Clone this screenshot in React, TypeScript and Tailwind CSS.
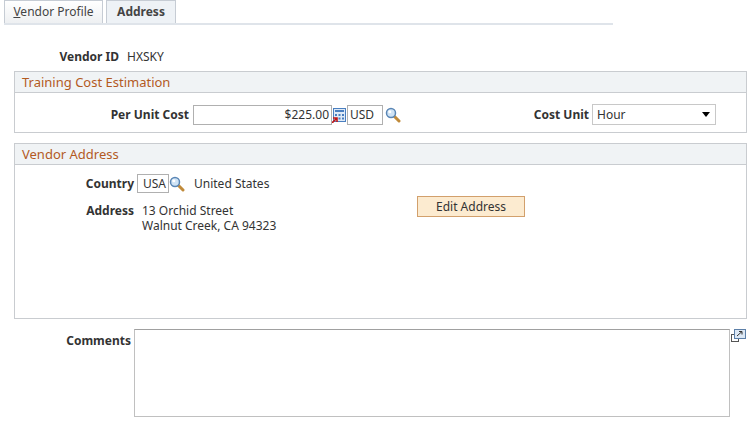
import React from 'react'

function Magnifier() {
  return (
    <svg width="16" height="16" viewBox="0 0 16 16" className="shrink-0">
      <line x1="9" y1="9" x2="14" y2="14" stroke="#c08a3a" strokeWidth="3" strokeLinecap="round" />
      <circle cx="6" cy="6" r="4.5" fill="#cfe3f5" stroke="#5a86b5" strokeWidth="1.5" />
      <circle cx="4.8" cy="4.8" r="1.5" fill="#ffffff" />
    </svg>
  )
}

function Calc() {
  return (
    <svg width="14" height="16" viewBox="0 0 14 16" className="shrink-0">
      <rect x="1.5" y="1.5" width="12" height="13" fill="#dfeaf7" stroke="#4a7fc0" />
      <rect x="3" y="3" width="9" height="2" fill="#4a7fc0" />
      <rect x="3" y="7" width="2" height="2" fill="#4a7fc0" />
      <rect x="6.5" y="7" width="2" height="2" fill="#4a7fc0" />
      <rect x="10" y="7" width="2" height="2" fill="#4a7fc0" />
      <rect x="6.5" y="10.5" width="2" height="2" fill="#4a7fc0" />
      <rect x="10" y="10.5" width="2" height="2" fill="#4a7fc0" />
      <path d="M0 16 L5 11 M1 11 L5 11 L5 15" stroke="#c01818" strokeWidth="1.6" fill="none" />
    </svg>
  )
}

function Section({ title, children, h }: { title: string; children: React.ReactNode; h: string }) {
  return (
    <div className={`ml-[14px] w-[733px] border border-[#c9ccd0] ${h}`}>
      <div className="h-[21px] border-b border-[#c9ccd0] bg-[#f0f3f5] pl-[7px] text-[13px] leading-[20px] text-[#b35a1f]">
        {title}
      </div>
      {children}
    </div>
  )
}

export default function App() {
  return (
    <div className="relative h-[426px] w-[753px] bg-white font-['Liberation_Sans',Arial,sans-serif] text-[12px] text-[#333]">
      {/* tabs */}
      <div className="ml-[4px] flex h-[25px] w-[609px] items-end gap-[3px] border-b-[2px] border-[#dfe4ea] pt-[2px]">
        <div className="flex h-[23px] w-[99px] items-center justify-center border border-b-0 border-[#c6ccd4] bg-gradient-to-b from-white to-[#eef0f2] text-[#444]">
          <span><span className="underline">V</span>endor Profile</span>
        </div>
        <div className="flex h-[23px] w-[70px] items-center justify-center border border-b-0 border-[#c6ccd4] bg-[#eef2f6] font-bold text-[#444]">
          Address
        </div>
      </div>

      <div className="mt-[24px] flex h-[16px] items-center">
        <span className="w-[119px] text-right font-bold">Vendor ID</span>
        <span className="ml-[8px]">HXSKY</span>
      </div>

      <div className="mt-[6px]">
        <Section title="Training Cost Estimation" h="h-[62px]">
          <div className="mt-[11px] flex items-center">
            <span className="w-[174px] text-right font-bold">Per Unit Cost</span>
            <div className="ml-[4px] h-[20px] w-[139px] border border-[#b0b0b0] pr-[2px] text-right leading-[18px]">$225.00</div>
            <Calc />
            <div className="ml-[1px] h-[20px] w-[36px] border border-[#b0b0b0] pl-[2px] leading-[18px]">USD</div>
            <span className="ml-[2px]"><Magnifier /></span>
            <span className="ml-auto font-bold">Cost Unit</span>
            <div className="ml-[3px] mr-[30px] flex h-[21px] w-[124px] items-center justify-between border border-[#c8c8c8] pl-[4px] pr-[5px]">
              <span>Hour</span>
              <svg width="8" height="5" viewBox="0 0 8 5"><path d="M0 0H8L4 5Z" fill="#000" /></svg>
            </div>
          </div>
        </Section>
      </div>

      <div className="mt-[10px]">
        <Section title="Vendor Address" h="h-[176px]">
          <div className="mt-[9px] flex items-center">
            <span className="w-[119px] text-right font-bold">Country</span>
            <div className="ml-[3px] h-[19px] w-[32px] border border-[#b0b0b0] pl-[5px] leading-[17px]">USA</div>
            <Magnifier />
            <span className="ml-[9px]">United States</span>
          </div>
          <div className="mt-[10px] flex">
            <span className="w-[119px] text-right font-bold leading-[15px]">Address</span>
            <div className="ml-[8px] w-[141px] shrink-0 leading-[15px]">
              <div>13 Orchid Street</div>
              <div>Walnut Creek, CA 94323</div>
            </div>
            <button className="ml-[134px] mt-[-7px] h-[21px] w-[108px] border border-[#d2a06c] bg-[#fcebd0] text-[12px] text-[#333]">
              Edit Address
            </button>
          </div>
        </Section>
      </div>

      <div className="mt-[10px] flex">
        <span className="mt-[3px] w-[131px] text-right font-bold">Comments</span>
        <div className="ml-[3px] h-[88px] w-[596px] border border-[#c0c0c0] border-t-[#a0a0a0]" />
        <svg width="16" height="14" viewBox="0 0 16 14" className="ml-[1px]">
          <rect x="0.5" y="5.5" width="7" height="7" fill="none" stroke="#555" />
          <rect x="3.5" y="0.5" width="11" height="9" fill="#dce8f5" stroke="#5c7fa8" />
          <path d="M6 7 L11 2.5 M8 2.5 H11 V5.5" stroke="#333" fill="none" />
        </svg>
      </div>
    </div>
  )
}
